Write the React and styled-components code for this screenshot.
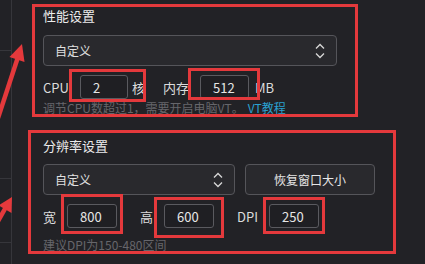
import React from 'react';
import styled, { createGlobalStyle } from 'styled-components';

const GlobalStyle = createGlobalStyle`
  html, body {
    margin: 0;
    padding: 0;
    background: #222226;
  }
  body {
    font-family: "Noto Sans CJK SC", "Noto Sans", sans-serif;
    color: #e6e6e6;
  }
`;

const Page = styled.div`
  position: relative;
  width: 425px;
  height: 264px;
  overflow: hidden;
  display: flex;
  background: #222226;
`;

const Sidebar = styled.div`
  width: 11px;
  flex-shrink: 0;
  border-right: 1px solid #36363b;
  display: flex;
  flex-direction: column;
`;

const SideItem = styled.div`
  height: ${(p) => p.$h}px;
  border-bottom: 1px solid #36363b;
  box-sizing: border-box;
`;

const Main = styled.div`
  flex: 1;
  padding: 6px 0 0 31px;
  display: flex;
  flex-direction: column;
`;

const Section = styled.section`
  display: flex;
  flex-direction: column;
  margin-top: ${(p) => p.$mt || 0}px;
`;

const Title = styled.div`
  font-size: 13px;
  line-height: 20px;
  height: 20px;
  color: #ececec;
`;

const SelectRow = styled.div`
  display: flex;
  gap: 10px;
  margin-top: ${(p) => p.$mt}px;
`;

const Select = styled.div`
  width: ${(p) => p.$w}px;
  height: 31px;
  box-sizing: border-box;
  border: 1px solid #55555a;
  border-radius: 4px;
  background: #29292d;
  display: flex;
  align-items: center;
  justify-content: space-between;
  padding: 0 10px 0 11px;
  font-size: 12px;
  color: #e0e0e0;
`;

const Button = styled.div`
  width: 130px;
  height: 31px;
  box-sizing: border-box;
  border: 1px solid #55555a;
  border-radius: 4px;
  background: #29292d;
  display: flex;
  align-items: center;
  justify-content: center;
  font-size: 12px;
  color: #e6e6e6;
`;

const FieldRow = styled.div`
  display: flex;
  align-items: center;
  height: 24px;
  margin-top: 9px;
`;

const Label = styled.span`
  width: ${(p) => p.$w}px;
  margin-left: ${(p) => p.$ml || 0}px;
  font-size: 13px;
  color: #dcdcdc;
  white-space: nowrap;
  flex-shrink: 0;
`;

const Input = styled.div`
  width: ${(p) => p.$w}px;
  height: 24px;
  box-sizing: border-box;
  border: 1px solid #5a5a5f;
  border-radius: 3px;
  background: #1f1f23;
  padding-left: 12px;
  display: flex;
  align-items: center;
  font-size: 13px;
  color: #e6e6e6;
  flex-shrink: 0;
`;

const Hint = styled.div`
  font-size: 12px;
  line-height: 16px;
  margin-top: ${(p) => p.$mt}px;
  color: #66666b;
  white-space: nowrap;
`;

const Link = styled.span`
  color: #2aa0d0;
  text-decoration: underline;
  margin-left: 4px;
`;

const Mark = styled.div`
  position: absolute;
  left: ${(p) => p.$x}px;
  top: ${(p) => p.$y}px;
  width: ${(p) => p.$w}px;
  height: ${(p) => p.$h}px;
  box-sizing: border-box;
  border: 3px solid #e4393c;
  pointer-events: none;
`;

const Arrows = styled.svg`
  position: absolute;
  left: 0;
  top: 0;
  pointer-events: none;
`;

const Chevrons = () => (
  <svg width="12" height="18" viewBox="0 0 12 18" fill="none" stroke="#d8d8d8" strokeWidth="1.3">
    <path d="M2 6.5 L6 2.5 L10 6.5" />
    <path d="M2 11.5 L6 15.5 L10 11.5" />
  </svg>
);

const marks = [
  { x: 32, y: 4, w: 326, h: 113 },
  { x: 69, y: 69, w: 77, h: 33 },
  { x: 188, y: 68, w: 72, h: 32 },
  { x: 28, y: 130, w: 368, h: 124 },
  { x: 61, y: 194, w: 62, h: 40 },
  { x: 154, y: 197, w: 70, h: 41 },
  { x: 263, y: 197, w: 62, h: 37 },
];

export default function App() {
  return (
    <>
      <GlobalStyle />
      <Page>
        <Sidebar>
          <SideItem $h={51} />
          <SideItem $h={128} />
          <SideItem $h={64} />
        </Sidebar>
        <Main>
          <Section>
            <Title>性能设置</Title>
            <SelectRow $mt={9}>
              <Select $w={294}>
                自定义
                <Chevrons />
              </Select>
            </SelectRow>
            <FieldRow>
              <Label $w={37}>CPU</Label>
              <Input $w={48}>2</Input>
              <Label $w={31} $ml={4}>核</Label>
              <Label $w={37}>内存</Label>
              <Input $w={49}>512</Input>
              <Label $w={30} $ml={6}>MB</Label>
            </FieldRow>
            <Hint $mt={1}>
              调节CPU数超过1，需要开启电脑VT。
              <Link>VT教程</Link>
            </Hint>
          </Section>
          <Section $mt={20}>
            <Title>分辨率设置</Title>
            <SelectRow $mt={8}>
              <Select $w={192}>
                自定义
                <Chevrons />
              </Select>
              <Button>恢复窗口大小</Button>
            </SelectRow>
            <FieldRow>
              <Label $w={24}>宽</Label>
              <Input $w={50}>800</Input>
              <Label $w={24} $ml={23}>高</Label>
              <Input $w={50}>600</Input>
              <Label $w={32} $ml={23}>DPI</Label>
              <Input $w={50}>250</Input>
            </FieldRow>
            <Hint $mt={9}>建议DPI为150-480区间</Hint>
          </Section>
        </Main>
        {marks.map((m) => (
          <Mark key={`${m.x}-${m.y}`} $x={m.x} $y={m.y} $w={m.w} $h={m.h} />
        ))}
        <Arrows width="425" height="264" viewBox="0 0 425 264">
          <line x1="-2" y1="118" x2="18" y2="57" stroke="#e4393c" strokeWidth="4.5" />
          <polygon points="22,44 24.5,62 9.5,57" fill="#e4393c" />
          <line x1="-3" y1="223" x2="6" y2="207" stroke="#e4393c" strokeWidth="4.5" />
          <polygon points="12,197 11.5,213 -1.5,205.5" fill="#e4393c" />
        </Arrows>
      </Page>
    </>
  );
}
